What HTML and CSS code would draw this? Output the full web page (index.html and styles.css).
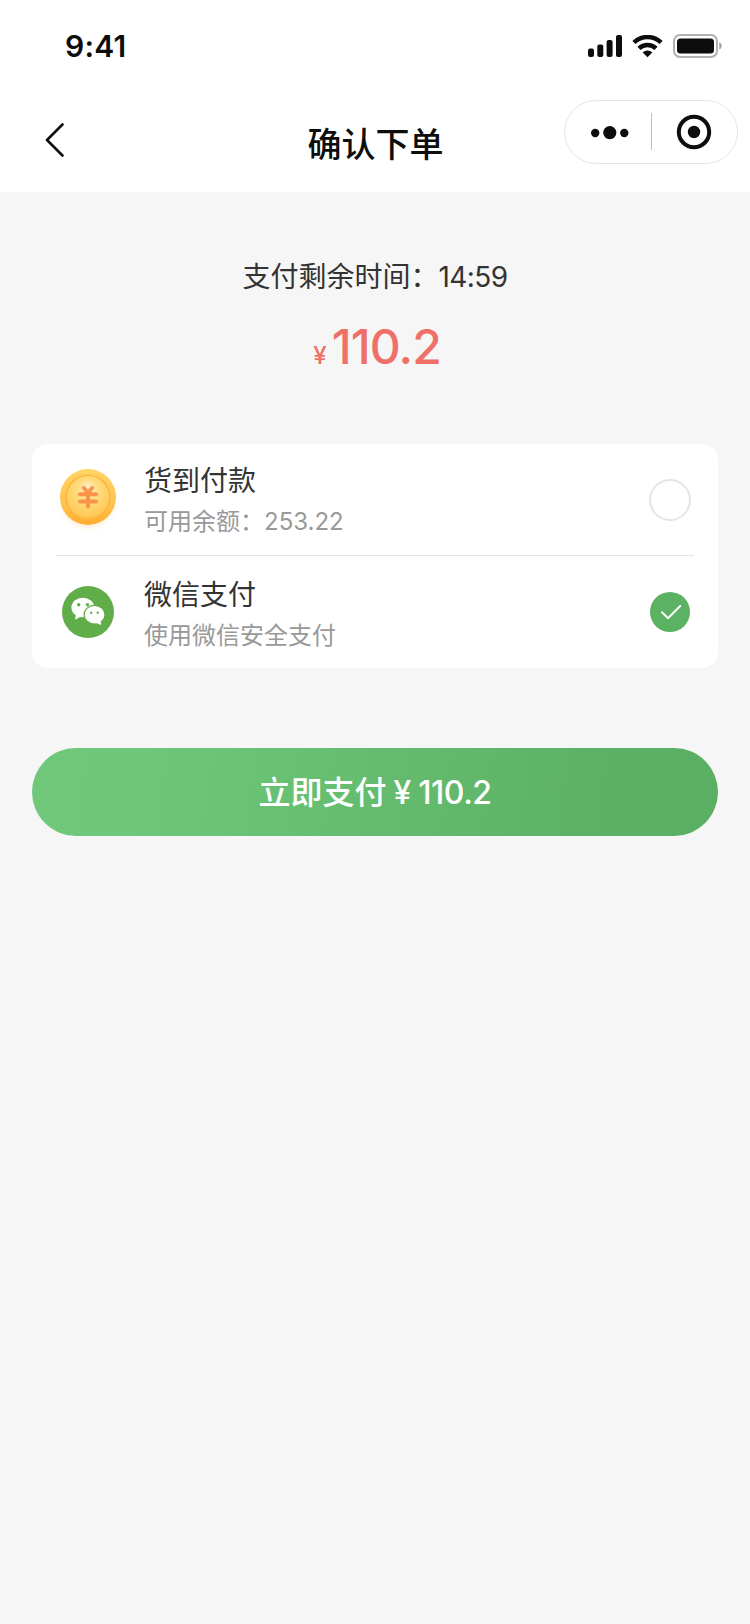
FILE: index.html
```html
<!DOCTYPE html>
<html lang="zh-CN">
<head>
  <meta charset="UTF-8">
  <title>确认下单</title>
  <link rel="stylesheet" href="styles.css">
</head>
<body>

  <header class="header">
    <div class="status-bar">
      <span class="time">9:41</span>
      <div class="status-icons">
        <svg class="signal" width="34" height="22" viewBox="0 0 34 22">
          <rect x="0" y="13.5" width="6" height="8.5" rx="2"></rect>
          <rect x="9.3" y="9.5" width="6" height="12.5" rx="2"></rect>
          <rect x="18.6" y="5" width="6" height="17" rx="2"></rect>
          <rect x="28" y="0" width="6" height="22" rx="2"></rect>
        </svg>
        <svg class="wifi" width="31" height="23" viewBox="0 0 32 23">
          <path d="M2 7.4a20 20 0 0 1 28 0"></path>
          <path d="M7.2 13.5a12.6 12.6 0 0 1 17.600 0"></path>
          <path class="dot" d="M16 22.600l-5-4.900a7.400 7.400 0 0 1 10 0z"></path>
        </svg>
        <svg class="battery" width="50" height="24" viewBox="0 0 50 24">
          <rect class="case" x="1" y="1" width="43" height="22" rx="6"></rect>
          <rect x="4" y="4.5" width="37" height="15" rx="3.5"></rect>
          <path class="cap" d="M46.3 8.3v7.4c3.2-1.4 3.2-6 0-7.4z"></path>
        </svg>
      </div>
    </div>

    <div class="nav">
      <svg class="back" width="20" height="34" viewBox="0 0 20 34">
        <path d="M17.5 1.5L2 17l15.5 15.5"></path>
      </svg>
      <h1 class="title">确认下单</h1>
      <div class="capsule">
        <svg class="more" width="38" height="14" viewBox="0 0 38 14">
          <circle cx="4.2" cy="7" r="4.2"></circle>
          <circle cx="18.8" cy="6.6" r="6.6"></circle>
          <circle cx="33.3" cy="7" r="4.2"></circle>
        </svg>
        <span class="line"></span>
        <svg class="close" width="36" height="36" viewBox="0 0 36 36">
          <circle class="ring" cx="18" cy="18" r="15.2"></circle>
          <circle cx="18" cy="18" r="6.2"></circle>
        </svg>
      </div>
    </div>
  </header>

  <main class="main">
    <p class="countdown">支付剩余时间：<span class="num">14:59</span></p>
    <p class="amount"><span class="unit">¥</span>110.2</p>

    <div class="card">
      <div class="item">
        <svg class="icon" width="64" height="68" viewBox="0 0 64 68">
          <defs>
            <linearGradient id="coin" x1="0" y1="0" x2="0" y2="1">
              <stop offset="0" stop-color="#ffd566"></stop>
              <stop offset=".6" stop-color="#ffc450"></stop>
              <stop offset="1" stop-color="#ffad30"></stop>
            </linearGradient>
            <radialGradient id="face" cx=".5" cy=".34" r=".66">
              <stop offset="0" stop-color="#fff6dc"></stop>
              <stop offset=".38" stop-color="#fedb7c"></stop>
              <stop offset="1" stop-color="#ffc753"></stop>
            </radialGradient>
            <filter id="soft" x="-20%" y="-20%" width="140%" height="140%">
              <feGaussianBlur stdDeviation="2.5"></feGaussianBlur>
            </filter>
          </defs>
          <circle cx="32" cy="36" r="26" fill="#f9f0dc" filter="url(#soft)"></circle>
          <circle cx="32" cy="31" r="28" fill="url(#coin)"></circle>
          <circle cx="32" cy="31" r="21.8" fill="url(#face)" stroke="#feb740" stroke-width="1.6"></circle>
          <path class="yuan" d="M27.8 22l4.200 4.500 4.200-4.500M24 28.200h16M24 35.400h16M32 27v13.500"></path>
        </svg>
        <div class="info">
          <div class="name">货到付款</div>
          <div class="desc">可用余额：<span class="balance">253.22</span></div>
        </div>
        <span class="radio"></span>
      </div>

      <div class="item">
        <svg class="icon" width="64" height="52" viewBox="0 0 64 52">
          <circle cx="32" cy="26" r="26" fill="#60ad49"></circle>
          <g fill="#fff">
            <ellipse cx="26.800" cy="21.500" rx="11.400" ry="9.800"></ellipse>
            <path d="M20 28l-1 5.800 6-3.200z"></path>
          </g>
          <ellipse cx="38.500" cy="28.700" rx="11" ry="9.900" fill="#60ad49"></ellipse>
          <g fill="#fff">
            <ellipse cx="38.500" cy="28.700" rx="9.900" ry="8.700"></ellipse>
            <path d="M40 37l5.200 1.900-.6-4.500z"></path>
          </g>
          <g fill="#60ad49">
            <circle cx="22.700" cy="18.700" r="1.700"></circle>
            <circle cx="31.500" cy="18.700" r="1.700"></circle>
            <circle cx="35.200" cy="26.700" r="1.200"></circle>
            <circle cx="41.700" cy="26.700" r="1.200"></circle>
          </g>
        </svg>
        <div class="info">
          <div class="name">微信支付</div>
          <div class="desc">使用微信安全支付</div>
        </div>
        <span class="radio checked">
          <svg width="40" height="40" viewBox="0 0 40 40">
            <path d="M12 20.200l6 6L30.200 14"></path>
          </svg>
        </span>
      </div>
    </div>

    <button class="pay"><span class="label">立即支付</span><span class="yen">¥</span><span class="price">110.2</span></button>
  </main>

</body>
</html>
```
FILE: styles.css
```css
* {
  box-sizing: border-box;
}

body {
  margin: 0;
  min-height: 100vh;
  background: #f6f6f6;
  color: #333;
  font-family: Inter, "Noto Sans CJK SC", sans-serif;
}

h1,
p {
  margin: 0;
}

svg {
  display: block;
}

.header {
  height: 192px;
  background: #fff;
}

.status-bar {
  height: 92px;
  padding: 0 27px 0 65px;
  display: flex;
  align-items: center;
  justify-content: space-between;
  color: #0d0d0d;
}

.time {
  font-size: 30px;
  font-weight: 600;
  letter-spacing: 0.2px;
}

.status-icons {
  display: flex;
  align-items: center;
  gap: 10px;
  fill: #0d0d0d;
}

.wifi path {
  fill: none;
  stroke: #0d0d0d;
  stroke-width: 4.6;
}

.wifi .dot {
  fill: #0d0d0d;
  stroke: none;
}

.battery .case {
  fill: none;
  stroke: #b5b0b0;
  stroke-width: 2;
}

.battery .cap {
  fill: #a5a0a0;
}

.nav {
  height: 64px;
  margin-top: 8px;
  padding: 0 12px 0 13px;
  display: grid;
  grid-template-columns: 1fr auto 1fr;
}

.back {
  margin: 23px 0 0 32px;
  fill: none;
  stroke: #0d0d0d;
  stroke-width: 2.6;
  stroke-linecap: round;
  stroke-linejoin: round;
}

.title {
  margin-top: 20px;
  font-size: 34px;
  line-height: 50px;
  font-weight: 500;
  color: #0d0d0d;
}

.capsule {
  justify-self: end;
  width: 174px;
  height: 64px;
  padding: 0 25px 0 26px;
  display: flex;
  align-items: center;
  border: 1px solid #e5e5e2;
  border-radius: 32px;
  fill: #0d0d0d;
}

.capsule .line {
  width: 1px;
  height: 37px;
  margin: 0 auto 1px 22px;
  background: #c0c0c0;
}

.more {
  margin-top: 1px;
}

.close .ring {
  fill: none;
  stroke: #0d0d0d;
  stroke-width: 4;
}

.main {
  padding: 65px 32px 0;
}

.countdown {
  font-size: 28px;
  line-height: 40px;
  text-align: center;
}

.countdown .num {
  letter-spacing: -0.6px;
}

.amount {
  height: 64px;
  margin-top: 19px;
  padding-left: 4px;
  font-size: 48px;
  line-height: 62px;
  font-weight: 500;
  letter-spacing: -0.9px;
  text-align: center;
  color: #ef7069;
}

.amount .unit {
  margin-right: 6px;
  font-size: 24px;
}

.card {
  height: 224px;
  margin-top: 64px;
  padding: 0 24px;
  border-radius: 16px;
  background: #fff;
}

.item {
  height: 112px;
  padding-right: 4px;
  display: flex;
  align-items: center;
}

.item:first-child {
  border-bottom: 1px solid #e6e6e6;
}

.yuan {
  fill: none;
  stroke: #fb9348;
  stroke-width: 4;
  stroke-linecap: round;
}

.info {
  flex: 1;
  margin-left: 24px;
  padding-top: 2px;
}

.item:last-child .info {
  padding-top: 4px;
}

.name {
  font-size: 28px;
  line-height: 40px;
}

.desc {
  margin-top: 3px;
  font-size: 24px;
  line-height: 36px;
  color: #999;
}

.radio {
  width: 42px;
  height: 42px;
  margin-right: -1px;
  border: 2px solid #e5e5e3;
  border-radius: 50%;
}

.radio.checked {
  width: 40px;
  height: 40px;
  margin-right: 0;
  border: 0;
  background: #5bb262;
}

.checked path {
  fill: none;
  stroke: #fff;
  stroke-width: 2;
  stroke-linecap: round;
  stroke-linejoin: round;
}

.pay {
  width: 100%;
  height: 88px;
  margin-top: 80px;
  padding: 0;
  display: flex;
  align-items: center;
  justify-content: center;
  border: none;
  border-radius: 44px;
  background: linear-gradient(98deg, #70c87b 0%, #6dc678 20%, #5bb063 85%, #5aaf62 100%);
  color: #fff;
  font-family: inherit;
  font-size: 32px;
  font-weight: 500;
}

.label {
  padding-bottom: 4px;
}

.yen {
  margin: 0 7px;
}

.price {
  letter-spacing: -0.5px;
}
```
